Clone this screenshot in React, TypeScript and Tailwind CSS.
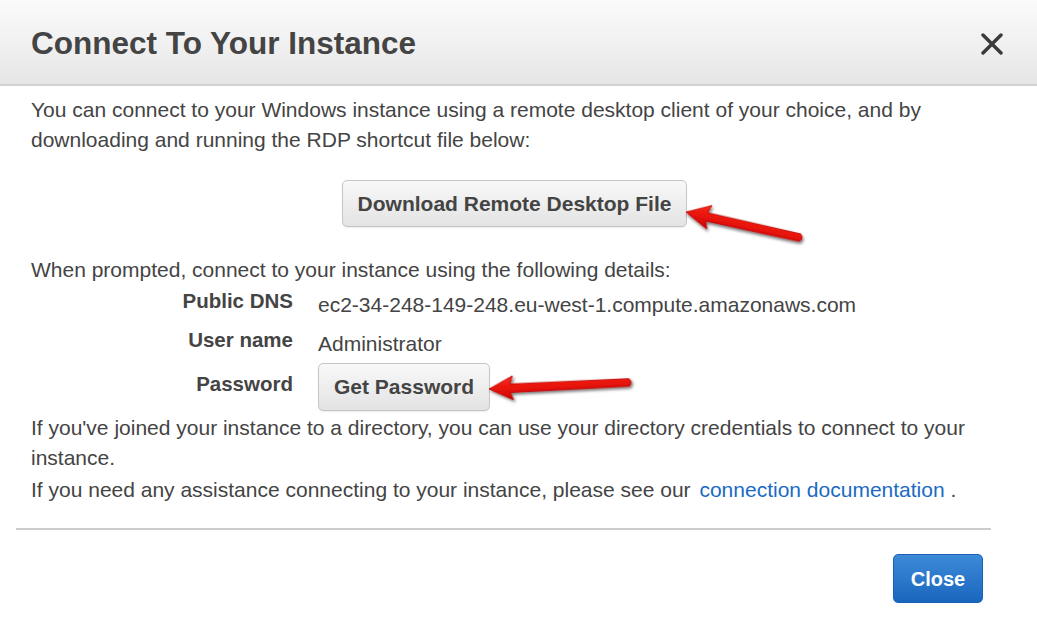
import React from 'react'

const font = { fontFamily: '"Liberation Sans", Arial, sans-serif' }

// hand-drawn style red annotation arrow, tip on the left
const RedArrow = ({
  tipX,
  tipY,
  tailX,
  tailY,
}: {
  tipX: number
  tipY: number
  tailX: number
  tailY: number
}) => {
  const dx = tailX - tipX
  const dy = tailY - tipY
  const len = Math.sqrt(dx * dx + dy * dy)
  const angle = (Math.atan2(dy, dx) * 180) / Math.PI
  return (
    <g transform={`translate(${tipX} ${tipY}) rotate(${angle})`}>
      <path
        d={`M0 0 L24 -12 L21 -4 L${len - 3} -3.5 Q${len + 1} 0 ${len - 3} 4 L21 4.5 L24 12 Z`}
        fill="url(#arrowRed)"
        stroke="#b80000"
        strokeWidth="0.8"
        filter="url(#arrowShadow)"
      />
    </g>
  )
}

const App: React.FC = () => {
  return (
    <div className="relative h-[627px] w-[1037px] overflow-hidden bg-white text-[#444]" style={font}>
      {/* 헤더 */}
      <div className="flex h-[86px] items-center justify-between border-b-2 border-[#d2d2d2] bg-gradient-to-b from-[#fbfbfb] via-[#f1f1f1] to-[#e6e6e6] pl-[31px] pr-[34px]">
        <h1 className="pt-[3px] text-[31.5px] font-bold leading-none text-[#444]">Connect To Your Instance</h1>
        <svg width="22" height="22" viewBox="0 0 22 22" className="mt-[4px]">
          <path d="M2 2 L20 20 M20 2 L2 20" stroke="#3a3a3a" strokeWidth="3.4" strokeLinecap="round" />
        </svg>
      </div>

      {/* 본문 */}
      <div className="pl-[31px] pr-[39px] pt-[9px] text-[21px] leading-[30px]">
        <p className="whitespace-nowrap">
          You can connect to your Windows instance using a remote desktop client of your choice, and by
          <br />
          downloading and running the RDP shortcut file below:
        </p>

        <div className="mt-[25px] flex justify-center">
          <button className="h-[47px] rounded-[5px] border border-[#c6c6c6] bg-gradient-to-b from-[#f9f9f9] to-[#e3e3e3] px-[15px] text-[21px] font-bold text-[#444] shadow-[0_1px_1px_rgba(0,0,0,0.08)]">
            Download Remote Desktop File
          </button>
        </div>

        <p className="mt-[28px]">When prompted, connect to your instance using the following details:</p>

        <div className="mt-[3px] grid grid-cols-[262px_auto] gap-x-[25px]">
          <div className="text-right text-[20.5px] font-bold leading-[26px]">Public DNS</div>
          <div className="pt-[2px]">ec2-34-248-149-248.eu-west-1.compute.amazonaws.com</div>

          <div className="mt-[7px] text-right text-[20.5px] font-bold leading-[26px]">User name</div>
          <div className="mt-[7px] pt-[2px]">Administrator</div>

          <div className="mt-[4px] pt-[8px] text-right text-[20.5px] font-bold leading-[26px]">Password</div>
          <div className="mt-[4px]">
            <button className="h-[48px] rounded-[5px] border border-[#c6c6c6] bg-gradient-to-b from-[#f9f9f9] to-[#e3e3e3] px-[15px] text-[21px] font-bold text-[#444] shadow-[0_1px_1px_rgba(0,0,0,0.08)]">
              Get Password
            </button>
          </div>
        </div>

        <p className="mt-[2px] whitespace-nowrap">
          If you've joined your instance to a directory, you can use your directory credentials to connect to your
          <br />
          instance.
        </p>
        <p className="mt-[2px] whitespace-nowrap">
          If you need any assistance connecting to your instance, please see our{' '}
          <a className="ml-[3px] text-[#1a6bc4]">connection documentation</a> .
        </p>
      </div>

      {/* 구분선 */}
      <div className="mx-[16px] mt-[23px] w-[975px] border-t-2 border-[#cccccc]" />

      {/* 푸터 */}
      <div className="flex justify-end pr-[54px] pt-[24px]">
        <button className="h-[49px] w-[90px] rounded-[5px] border border-[#1b62b5] bg-gradient-to-b from-[#3d8ad8] to-[#1966be] text-[20px] font-bold text-white">
          Close
        </button>
      </div>

      {/* 주석 화살표 */}
      <svg className="pointer-events-none absolute inset-0" width="1037" height="627">
        <defs>
          <linearGradient id="arrowRed" x1="0" y1="0" x2="0" y2="1">
            <stop offset="0" stopColor="#ff2a1a" />
            <stop offset="1" stopColor="#d00000" />
          </linearGradient>
          <filter id="arrowShadow" x="-20%" y="-50%" width="140%" height="200%">
            <feDropShadow dx="1.5" dy="2" stdDeviation="1.5" floodColor="#000" floodOpacity="0.55" />
          </filter>
        </defs>
        <RedArrow tipX={686} tipY={212} tailX={803} tailY={238} />
        <RedArrow tipX={489} tipY={389} tailX={632} tailY={382} />
      </svg>
    </div>
  )
}

export default App
